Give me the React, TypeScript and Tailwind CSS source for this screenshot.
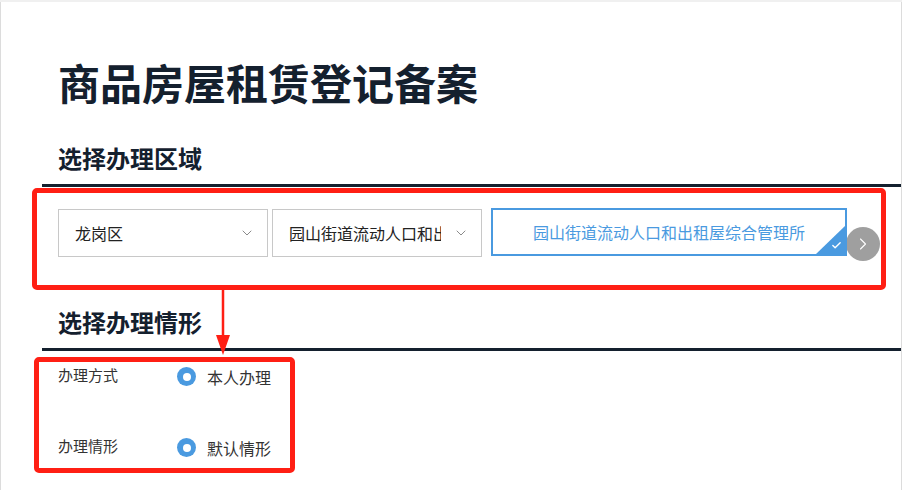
import { ChevronDown, ChevronRight, Check } from 'lucide-react';

const font = { fontFamily: '"Noto Sans CJK SC", "Noto Sans", sans-serif' };

function SectionHeading({ title }: { title: string }) {
  return (
    <div>
      <h2 className="pl-4 text-[24px] leading-[32px] font-bold text-[#14202e]">{title}</h2>
      <div className="mt-[10px] h-[3px] bg-[#14202e]" />
    </div>
  );
}

function Select({ value }: { value: string }) {
  return (
    <div className="flex h-[48px] w-[210px] items-center border border-[#c8c8c8] bg-white pl-4 pr-3">
      <span className="flex-1 overflow-hidden whitespace-nowrap text-[16px] text-[#222]">{value}</span>
      <ChevronDown className="ml-3 h-4 w-4 shrink-0 text-[#8a8a8a]" strokeWidth={1.5} />
    </div>
  );
}

function RadioRow({ label, option }: { label: string; option: string }) {
  return (
    <div className="flex h-[20px] items-center">
      <span className="w-[119px] text-[15px] leading-[20px] text-[#333] -mt-[2px]">{label}</span>
      <span className="flex h-[19px] w-[19px] items-center justify-center rounded-full bg-[#4a9ae0] mt-[1px]">
        <span className="h-[8px] w-[8px] rounded-full bg-white" />
      </span>
      <span className="ml-[11px] text-[16px] leading-[20px] text-[#333] mt-[2px]">{option}</span>
    </div>
  );
}

export default function App() {
  return (
    <div className="relative h-[490px] w-[902px] overflow-hidden bg-white" style={font}>
      <div className="h-[2px] bg-[#f0f0f0]" />
      <div className="h-[488px] border-l border-r border-[#dcdcdc] pl-[41px] pt-[54px]">
        <h1 className="pl-4 text-[42px] leading-[52px] font-bold text-[#14202e]">商品房屋租赁登记备案</h1>

        <div className="mt-[34px]">
          <SectionHeading title="选择办理区域" />
        </div>

        {/* region selects */}
        <div className="mt-[22px] flex items-start pl-4">
          <Select value="龙岗区" />
          <div className="ml-1">
            <Select value="园山街道流动人口和出租屋综合管理所" />
          </div>
          <div className="relative -mt-[1px] ml-[9px] flex h-[48px] w-[356px] items-center justify-center border-2 border-[#4a9ae0] bg-white">
            <span className="text-[16px] text-[#4a9ae0]">园山街道流动人口和出租屋综合管理所</span>
            <div className="absolute bottom-0 right-0 h-0 w-0 border-b-[28px] border-l-[29px] border-b-[#4a9ae0] border-l-transparent" />
            <Check className="absolute bottom-[3px] right-[3px] h-[11px] w-[11px] text-white" strokeWidth={3} />
          </div>
          <div className="-ml-[1px] mt-[18px] flex h-[34px] w-[34px] items-center justify-center rounded-full bg-[#9a9a9a]/95">
            <ChevronRight className="h-[20px] w-[20px] text-white" strokeWidth={1.3} />
          </div>
        </div>

        <div className="mt-[45px]">
          <SectionHeading title="选择办理情形" />
        </div>

        <div className="mt-[15px] flex flex-col gap-[51px] pl-4">
          <RadioRow label="办理方式" option="本人办理" />
          <RadioRow label="办理情形" option="默认情形" />
        </div>
      </div>

      {/* annotations */}
      <div className="absolute left-[32px] top-[188px] h-[102px] w-[854px] rounded-[5px] border-[5px] border-[#ff1f14]" />
      <div className="absolute left-[34px] top-[357px] h-[116px] w-[261px] rounded-[5px] border-[5px] border-[#ff1f14]" />
      <svg className="absolute left-[213px] top-[289px]" width="20" height="68" viewBox="0 0 20 68">
        <line x1="10" y1="0" x2="10" y2="50" stroke="#ff1f14" strokeWidth="2.5" />
        <polygon points="3,46 17,46 10,66" fill="#ff1f14" />
      </svg>
    </div>
  );
}
